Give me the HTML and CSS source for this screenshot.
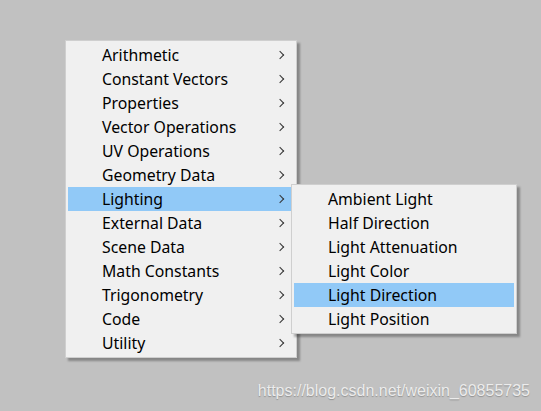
FILE: index.html
```html
<!DOCTYPE html>
<html lang="en">
<head>
    <meta charset="UTF-8">
    <title>Node Menu</title>
    <link rel="stylesheet" href="styles.css">
</head>
<body>
    <div class="desktop">
        <ul class="menu main-menu">
            <li class="item">Arithmetic<span class="chevron"></span></li>
            <li class="item">Constant Vectors<span class="chevron"></span></li>
            <li class="item">Properties<span class="chevron"></span></li>
            <li class="item">Vector Operations<span class="chevron"></span></li>
            <li class="item">UV Operations<span class="chevron"></span></li>
            <li class="item">Geometry Data<span class="chevron"></span></li>
            <li class="item active">Lighting<span class="chevron"></span></li>
            <li class="item">External Data<span class="chevron"></span></li>
            <li class="item">Scene Data<span class="chevron"></span></li>
            <li class="item">Math Constants<span class="chevron"></span></li>
            <li class="item">Trigonometry<span class="chevron"></span></li>
            <li class="item">Code<span class="chevron"></span></li>
            <li class="item">Utility<span class="chevron"></span></li>
        </ul>

        <ul class="menu sub-menu">
            <li class="item">Ambient Light</li>
            <li class="item">Half Direction</li>
            <li class="item">Light Attenuation</li>
            <li class="item">Light Color</li>
            <li class="item active">Light Direction</li>
            <li class="item">Light Position</li>
        </ul>

        <div class="watermark">https://blog.csdn.net/weixin_60855735</div>
    </div>
</body>
</html>
```

FILE: styles.css
```css
body {
    margin: 0;
    background-color: #c1c1c1;
    font-family: "Noto Sans", "Noto Sans CJK SC", sans-serif;
}

.desktop {
    position: relative;
    width: 541px;
    height: 411px;
    overflow: hidden;
}

.menu {
    position: absolute;
    list-style: none;
    margin: 0;
    padding: 2px;
    background-color: #f0f0f0;
    border: 1px solid #cfcfcf;
    box-shadow: 3px 3px 2px rgba(0, 0, 0, 0.3);
}

.main-menu {
    left: 65px;
    top: 40px;
    width: 226px;
}

.sub-menu {
    left: 291px;
    top: 184px;
    width: 220px;
}

.item {
    position: relative;
    height: 24px;
    line-height: 24px;
    padding-left: 34px;
    font-size: 15.8px;
    color: #000;
}

.item.active {
    background-color: #91c9f7;
}

/* the little ">" on the right side */
.chevron {
    position: absolute;
    right: 11px;
    top: 9px;
    width: 5px;
    height: 5px;
    border-top: 1px solid #333;
    border-right: 1px solid #333;
    transform: rotate(45deg);
}

.watermark {
    position: absolute;
    right: 11px;
    bottom: 11px;
    font-family: "Liberation Sans", Arial, sans-serif;
    font-size: 16px;
    color: #ececec;
    text-shadow: 0 1px 1px rgba(0, 0, 0, 0.25);
}
```
